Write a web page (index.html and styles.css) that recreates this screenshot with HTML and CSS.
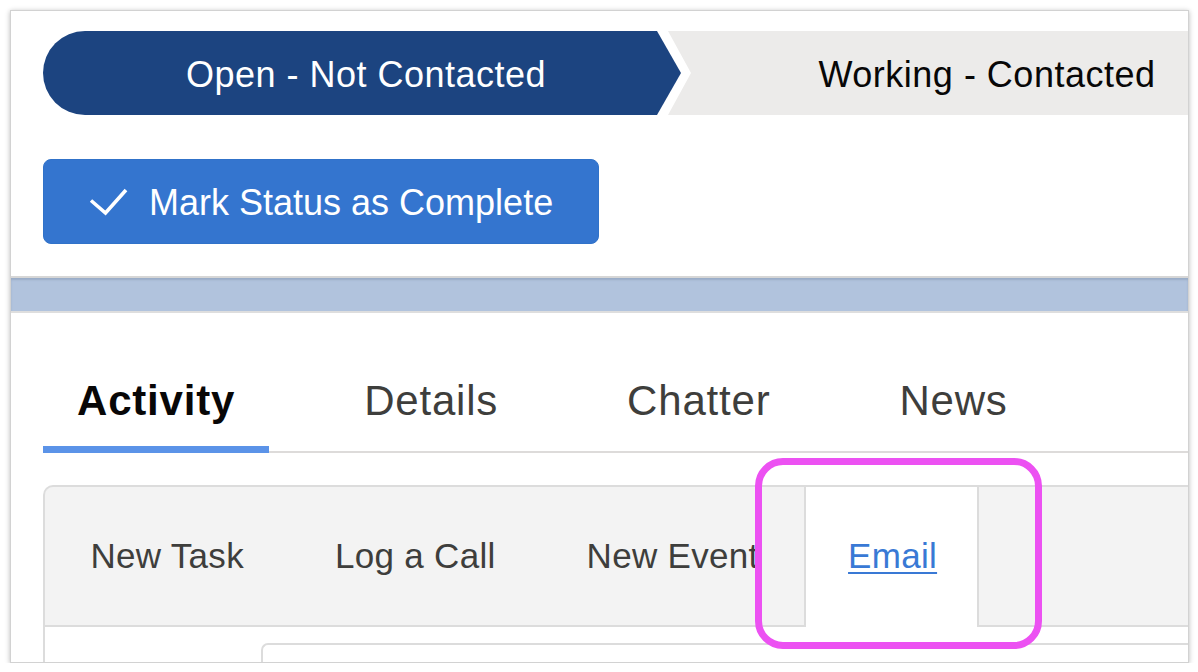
FILE: index.html
```html
<!DOCTYPE html>
<html lang="en">
<head>
<meta charset="utf-8">
<title>Lead status</title>
<link rel="stylesheet" href="styles.css">
</head>
<body>
<div class="window">
  <section class="header-card">
    <div class="path">
      <div class="step step-current">Open - Not Contacted</div>
      <div class="step step-next">Working - Contacted</div>
    </div>
    <button class="complete-btn" type="button">
      <svg class="check" width="40" height="28" viewBox="0 0 40 28" aria-hidden="true">
        <path d="M3 12.5 L17.5 25 L38 2" fill="none" stroke="#fff" stroke-width="3.6" stroke-linejoin="miter"/>
      </svg>
      <span>Mark Status as Complete</span>
    </button>
  </section>
  <div class="band"></div>
  <section class="main-card">
    <nav class="tabs">
      <a class="tab tab-active">Activity</a>
      <a class="tab">Details</a>
      <a class="tab">Chatter</a>
      <a class="tab">News</a>
    </nav>
    <div class="composer">
      <div class="composer-tabs">
        <span class="ctab">New Task</span>
        <span class="ctab">Log a Call</span>
        <span class="ctab">New Event</span>
        <span class="ctab ctab-active"><a class="email-link">Email</a><span class="highlight"></span></span>
      </div>
      <div class="composer-body">
        <div class="inner-box"></div>
      </div>
    </div>
  </section>
</div>
</body>
</html>
```

FILE: styles.css
```css
* { box-sizing: border-box; }

html, body {
  margin: 0;
  padding: 0;
  background: #ffffff;
}

body {
  font-family: "Liberation Sans", Arial, sans-serif;
}

.window {
  margin: 10px 0 0 10px;
  width: 1179px;
  height: 653px;
  background: #ffffff;
  border: 1px solid #d2d2d2;
  box-shadow: 0 1px 5px rgba(0, 0, 0, 0.28);
  overflow: hidden;
  display: flex;
  flex-direction: column;
}

/* ---------- header card ---------- */
.header-card {
  padding: 20px 0 32px 32px;
  border-bottom: 2px solid #d6d6d6;
}

.path {
  display: flex;
  flex-wrap: nowrap;
  height: 84px;
}

.step {
  flex: 0 0 638px;
  height: 84px;
  display: flex;
  align-items: center;
  justify-content: center;
  font-size: 36px;
  letter-spacing: 0.5px;
  white-space: nowrap;
  padding-top: 3px;
}

.step-current {
  background: #1c4480;
  color: #ffffff;
  border-radius: 42px 0 0 42px;
  clip-path: polygon(0 0, calc(100% - 24px) 0, 100% 50%, calc(100% - 24px) 100%, 0 100%);
  padding-left: 8px;
}

.step-next {
  margin-left: -13px;
  background: #ecebea;
  color: #080707;
  clip-path: polygon(0 0, calc(100% - 24px) 0, 100% 50%, calc(100% - 24px) 100%, 0 100%, 23px 50%);
}

.complete-btn {
  margin-top: 44px;
  height: 85px;
  width: 556px;
  display: flex;
  align-items: center;
  padding: 3px 0 0 44px;
  border: 1px solid #3072c9;
  border-radius: 8px;
  background: #3475cf;
  color: #ffffff;
  font-family: "Liberation Sans", Arial, sans-serif;
  font-size: 36px;
  cursor: pointer;
}

.check {
  flex: 0 0 auto;
  margin-right: 21px;
  margin-top: -3px;
}

/* ---------- band between cards ---------- */
.band {
  flex: 0 0 33px;
  background: #b1c3dd;
  box-shadow: inset 0 2px 2px rgba(60, 80, 110, 0.2);
}

/* ---------- main card ---------- */
.main-card {
  flex: 1 1 auto;
  border-top: 2px solid #dedede;
  padding-left: 32px;
}

.tabs {
  display: flex;
  padding-top: 62px;
  border-bottom: 2px solid #dddbda;
  gap: 61px;
}

.tab {
  font-size: 42px;
  line-height: 50px;
  letter-spacing: 0.8px;
  padding: 1px 34px 20px 34px;
  border-bottom: 7px solid transparent;
  margin-bottom: -2px;
  color: #3e3e3c;
}

.tab-active {
  font-weight: bold;
  color: #080707;
  border-bottom-color: #5b93e8;
}

.composer {
  margin-top: 32px;
  margin-right: -60px;
  background: #f3f3f3;
  border: 2px solid #dcdcdc;
  border-right: none;
  border-bottom: none;
  border-radius: 10px 0 0 0;
  height: 200px;
}

.composer-tabs {
  display: flex;
  height: 140px;
  border-bottom: 2px solid #dcdcdc;
}

.ctab {
  font-size: 35px;
  line-height: 42px;
  letter-spacing: 0.3px;
  padding: 48px 45.5px;
  color: #3e3e3c;
  white-space: nowrap;
}

.ctab-active {
  position: relative;
  background: #ffffff;
  border-left: 2px solid #dcdcdc;
  border-right: 2px solid #dcdcdc;
  padding: 48px 40px 50px 42px;
  margin-bottom: -2px;
  height: 140px;
}

.email-link {
  color: #3979d5;
  text-decoration: underline;
  text-decoration-thickness: 2px;
  text-underline-offset: 4px;
}

.highlight {
  position: absolute;
  left: -51px;
  top: -29px;
  width: 287px;
  height: 191px;
  border: 7px solid #ec51f2;
  border-radius: 28px;
  pointer-events: none;
}

.composer-body {
  background: #ffffff;
  height: 60px;
  padding: 16px 0 0 216px;
}

.inner-box {
  height: 60px;
  border-top: 2px solid #dcdcdc;
  border-left: 2px solid #dcdcdc;
  border-radius: 7px 0 0 0;
}
```
